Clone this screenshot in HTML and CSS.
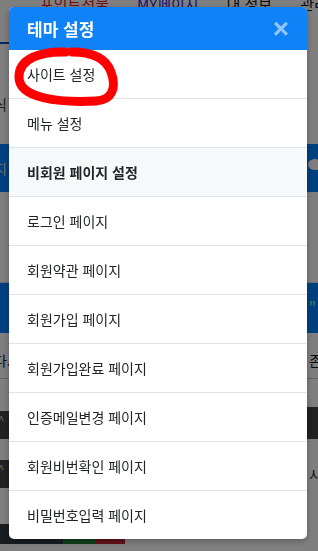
FILE: index.html
```html
<!DOCTYPE html>
<html lang="ko">
<head>
    <meta charset="UTF-8">
    <meta name="viewport" content="width=device-width, initial-scale=1.0">
    <title>테마 설정</title>
    <link rel="stylesheet" href="styles.css">
</head>
<body>
    <div class="page">
        <div class="topnav">
            <a href="#" class="nav-point">포인트선물</a>
            <span class="nav-sep"></span>
            <a href="#" class="nav-my">MY페이지</a>
            <span class="nav-sep"></span>
            <a href="#">내 정보</a>
            <span class="nav-sep"></span>
            <a href="#">관리자</a>
        </div>
        <div class="tabs"><span class="tab-on"></span></div>
        <div class="row row-text">식</div>
        <div class="band band-blue"><span class="band-left">지</span><span class="bubble"></span></div>
        <div class="row row-gap"></div>
        <div class="band band-blue band-quote"><span class="band-left"></span><span class="quote">"</span></div>
        <div class="row row-notice"><span>다.</span><span>존</span></div>
        <div class="row row-select"><span class="sel-left">^</span><span class="sel-right">▾</span></div>
        <div class="row row-select2"><span class="sel-left">^</span><span class="sel-text">시</span></div>
        <div class="buttons">
            <span class="btn btn-dark"></span>
            <span class="btn btn-green"></span>
            <span class="btn btn-red"></span>
        </div>
    </div>

    <div class="backdrop"></div>

    <div class="modal">
        <div class="modal-head">
            <h2>테마 설정</h2>
            <button class="close">&times;</button>
        </div>
        <ul class="theme-list">
            <li><a href="#">사이트 설정</a></li>
            <li><a href="#">메뉴 설정</a></li>
            <li class="group">비회원 페이지 설정</li>
            <li><a href="#">로그인 페이지</a></li>
            <li><a href="#">회원약관 페이지</a></li>
            <li><a href="#">회원가입 페이지</a></li>
            <li><a href="#">회원가입완료 페이지</a></li>
            <li><a href="#">인증메일변경 페이지</a></li>
            <li><a href="#">회원비번확인 페이지</a></li>
            <li><a href="#">비밀번호입력 페이지</a></li>
        </ul>
    </div>

    <!-- 빨간 펜 표시 -->
    <svg class="scribble" width="318" height="551" viewBox="0 0 318 551">
        <path d="M66 52 C42 51 18 58 19 78 C20 98 58 103 96 101 C112 100 117 88 111 72 C106 58 92 52 72 52"
              fill="none" stroke="#f00" stroke-width="9" stroke-linecap="round"/>
    </svg>
</body>
</html>
```

FILE: styles.css
```css
body {
    margin: 0;
    width: 318px;
    height: 551px;
    overflow: hidden;
    font-family: "Noto Sans CJK KR", "Noto Sans", sans-serif;
    background-color: #fff;
    color: #212529;
}

/* 뒤 페이지 */
.page {
    height: 551px;
    overflow: hidden;
}

.topnav {
    display: flex;
    align-items: center;
    height: 14px;
    padding-left: 40px;
    font-size: 15px;
    line-height: 14px;
    margin-top: -3px;
}

.topnav a {
    color: #111;
    text-decoration: none;
    white-space: nowrap;
}

.topnav .nav-point {
    color: #e02020;
}

.topnav .nav-my {
    color: #2222dd;
}

.nav-sep {
    width: 1px;
    height: 14px;
    background-color: #bbb;
    margin: 0 14px;
}

.tabs {
    height: 33px;
    display: flex;
    align-items: flex-end;
}

.tab-on {
    width: 60px;
    height: 2px;
    background-color: #0d4fbf;
}

.row {
    display: flex;
    justify-content: space-between;
    font-size: 14px;
    color: #333;
}

.row-text {
    height: 100px;
    align-items: center;
    margin-left: -6px;
    padding-top: 20px;
    box-sizing: border-box;
}

.band {
    display: flex;
    justify-content: space-between;
    align-items: center;
    height: 48px;
    background-color: #0080ff;
    color: #fff;
    font-size: 14px;
}

.band-left {
    margin-left: -6px;
    color: #ddd;
}

.bubble {
    width: 14px;
    height: 11px;
    border-radius: 50%;
    background-color: #fff;
    margin: 0 -4px 8px 0;
}

.row-gap {
    height: 91px;
    border-bottom: 1px solid #ddd;
    box-sizing: border-box;
}

.band-quote {
    height: 50px;
}

.quote {
    margin-right: 2px;
    font-size: 16px;
    color: #8ee;
}

.row-notice {
    height: 37px;
    align-items: center;
    border-bottom: 1px solid #ccc;
    padding: 8px 0 0;
    margin: 0 -4px 0 -6px;
    color: #111;
}

.row-select {
    height: 60px;
    align-items: flex-end;
}

.sel-left {
    width: 30px;
    height: 28px;
    background-color: #444;
    color: #ccc;
    font-size: 12px;
    text-align: center;
    margin-left: -14px;
}

.sel-right {
    width: 40px;
    height: 32px;
    background-color: #444;
    color: #ccc;
    font-size: 12px;
}

.row-select2 {
    height: 70px;
    align-items: center;
}

.sel-text {
    margin-right: -4px;
    color: #111;
}

.buttons {
    display: flex;
    margin-top: 15px;
}

.btn {
    height: 20px;
    border-radius: 0 4px 0 0;
}

.btn-dark {
    width: 63px;
    background-color: #343a40;
}

.btn-green {
    width: 33px;
    background-color: #1e7e34;
}

.btn-red {
    width: 29px;
    background-color: #c82333;
}

.backdrop {
    position: fixed;
    top: 0;
    left: 0;
    right: 0;
    bottom: 0;
    background-color: rgba(0, 0, 0, 0.5);
}

/* 모달 */
.modal {
    position: fixed;
    top: 7px;
    left: 9px;
    width: 298px;
    background-color: #fff;
    border-radius: 5px;
    overflow: hidden;
    box-shadow: 0 2px 6px rgba(0, 0, 0, 0.3);
}

.modal-head {
    display: flex;
    justify-content: space-between;
    align-items: center;
    height: 43px;
    padding: 0 18px;
    background-color: #0f82f8;
}

.modal-head h2 {
    margin: 0;
    font-size: 17px;
    font-weight: bold;
    color: #fff;
}

.close {
    border: none;
    background: none;
    padding: 0;
    font-family: Arial, "Liberation Sans", sans-serif;
    font-size: 28px;
    font-weight: bold;
    line-height: 1;
    color: rgba(255, 255, 255, 0.55);
    cursor: pointer;
}

.theme-list {
    list-style: none;
    margin: 0;
    padding: 0;
}

.theme-list li {
    height: 48px;
    line-height: 48px;
    padding: 0 18px;
    border-bottom: 1px solid #dfe2e6;
    font-size: 14px;
}

.theme-list li:last-child {
    border-bottom: none;
}

.theme-list li a {
    color: #212529;
    text-decoration: none;
}

.theme-list li.group {
    background-color: #f7f8fa;
    font-weight: bold;
}

.scribble {
    position: fixed;
    top: 0;
    left: 0;
    pointer-events: none;
}
```
